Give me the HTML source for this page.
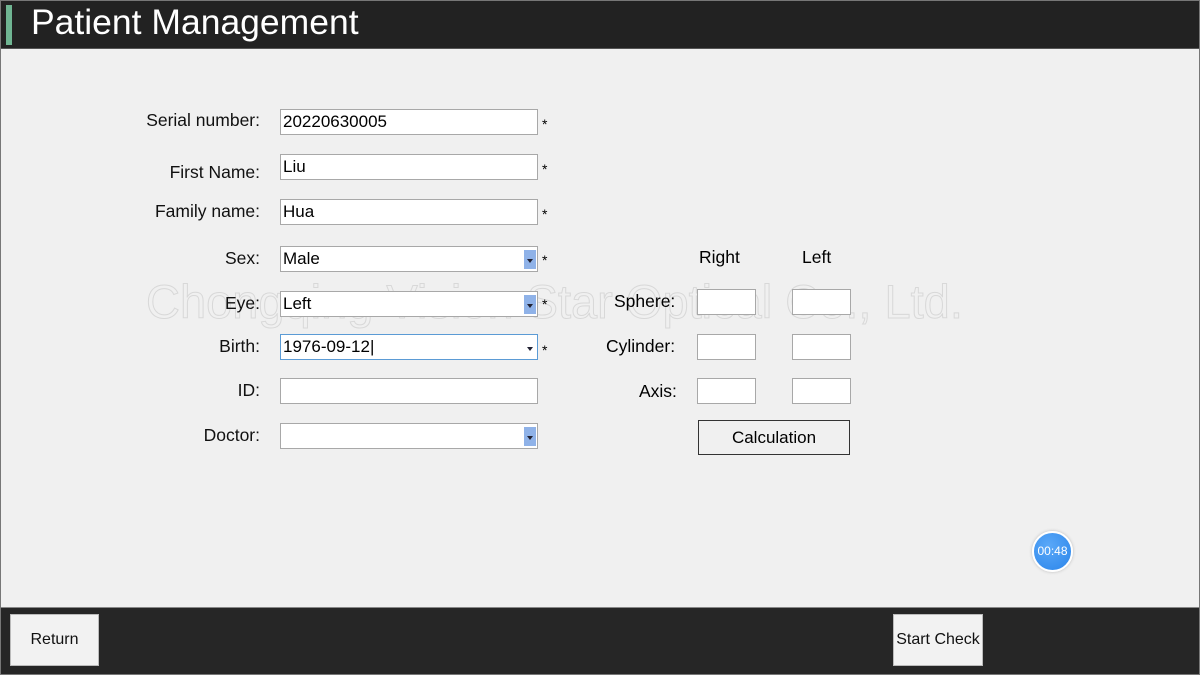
<!DOCTYPE html>
<html><head><style>
*{margin:0;padding:0;box-sizing:border-box}
body{width:1200px;height:675px;background:#f0f0f0;font-family:"Liberation Sans",sans-serif;position:relative;overflow:hidden}
.a{position:absolute}
.hdr{left:0;top:0;width:1200px;height:49px;background:#222;border-bottom:1px solid #555}
.lbl{font-size:17.5px;color:#111;text-align:right;width:200px;left:60px}
.in{background:#fff;border:1px solid #a8a8a8;height:26px;font-size:17px;padding:2px 0 0 2px;color:#000}
.dd{position:absolute;right:1px;top:3px;width:12px;height:19px;background:#8fb2e8}
.dd:after{content:"";position:absolute;left:3px;top:9px;border-left:3px solid transparent;border-right:3px solid transparent;border-top:4px solid #223}
.st{font-size:14px}
.sm{background:#fff;border:1px solid #a8a8a8;width:59px;height:26px}
.ftr{left:0;top:607px;width:1200px;height:68px;background:#262626;border-top:1px solid #888}
.btn{background:#f2f2f2;border:1px solid #bbb;font-size:16px;text-align:center;color:#111}
</style></head><body>
<div class="a hdr"></div>
<div class="a" style="left:0;top:0;width:1200px;height:675px;border:1px solid #777;z-index:5;pointer-events:none"></div>
<div class="a" style="left:6px;top:5px;width:6px;height:40px;background:#6fb592"></div>
<div class="a" style="left:31px;top:2px;font-size:35.5px;color:#fff">Patient Management</div>

<div class="a" style="left:146px;top:274px;font-size:47px;color:transparent;-webkit-text-stroke:1px #d8d8d8;white-space:nowrap">Chongqing Vision Star Optical Co., Ltd.</div>

<div class="a lbl" style="top:110px">Serial number:</div>
<div class="a in" style="left:280px;top:109px;width:258px">20220630005</div><div class="a st" style="left:542px;top:116px">*</div>
<div class="a lbl" style="top:162px">First Name:</div>
<div class="a in" style="left:280px;top:154px;width:258px">Liu</div><div class="a st" style="left:542px;top:161px">*</div>
<div class="a lbl" style="top:201px">Family name:</div>
<div class="a in" style="left:280px;top:199px;width:258px">Hua</div><div class="a st" style="left:542px;top:206px">*</div>
<div class="a lbl" style="top:248px">Sex:</div>
<div class="a in" style="left:280px;top:246px;width:258px">Male<div class="dd"></div></div><div class="a st" style="left:542px;top:252px">*</div>
<div class="a lbl" style="top:293px">Eye:</div>
<div class="a in" style="left:280px;top:291px;width:258px">Left<div class="dd"></div></div><div class="a st" style="left:542px;top:296px">*</div>
<div class="a lbl" style="top:336px">Birth:</div>
<div class="a in" style="left:280px;top:334px;width:258px;border-color:#5b9bd5">1976-09-12|<div class="dd" style="background:none"></div></div><div class="a st" style="left:542px;top:342px">*</div>
<div class="a lbl" style="top:380px">ID:</div>
<div class="a in" style="left:280px;top:378px;width:258px"></div>
<div class="a lbl" style="top:425px">Doctor:</div>
<div class="a in" style="left:280px;top:423px;width:258px"><div class="dd"></div></div>

<div class="a" style="left:699px;top:247px;font-size:17.5px">Right</div>
<div class="a" style="left:802px;top:247px;font-size:17.5px">Left</div>
<div class="a" style="left:614px;top:291px;font-size:17.5px">Sphere:</div>
<div class="a" style="left:606px;top:336px;font-size:17.5px">Cylinder:</div>
<div class="a" style="left:639px;top:381px;font-size:17.5px">Axis:</div>
<div class="a sm" style="left:697px;top:289px"></div><div class="a sm" style="left:792px;top:289px"></div>
<div class="a sm" style="left:697px;top:334px"></div><div class="a sm" style="left:792px;top:334px"></div>
<div class="a sm" style="left:697px;top:378px"></div><div class="a sm" style="left:792px;top:378px"></div>
<div class="a" style="left:698px;top:420px;width:152px;height:35px;border:1px solid #333;background:#f0f0f0;font-size:17px;text-align:center;line-height:33px">Calculation</div>

<div class="a" style="left:1032px;top:531px;width:41px;height:41px;border-radius:50%;background:radial-gradient(circle at 40% 35%,#5aa8f8,#2b85ea);border:2px solid #fff;box-shadow:0 0 3px #bbb;color:#fff;font-size:12px;text-align:center;line-height:37px">00:48</div>

<div class="a ftr"></div>
<div class="a btn" style="left:10px;top:614px;width:89px;height:52px;line-height:50px">Return</div>
<div class="a btn" style="left:893px;top:614px;width:90px;height:52px;line-height:50px">Start Check</div>
</body></html>
